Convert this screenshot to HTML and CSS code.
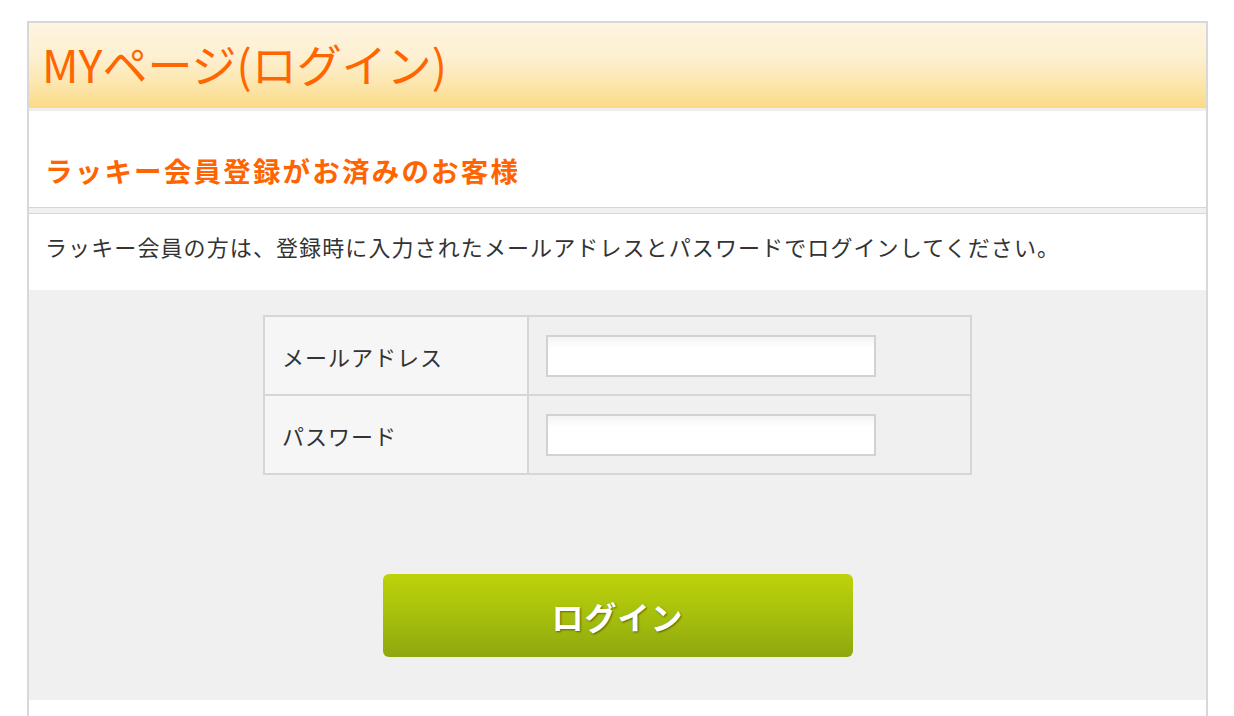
FILE: index.html
```html
<!DOCTYPE html>
<html>
<head>
    <meta charset="utf-8">
    <title>MYページ(ログイン)</title>
    <link rel="stylesheet" href="styles.css">
</head>
<body>
<div id="mypage">
    <h1 class="page-title">MYページ(ログイン)</h1>

    <div class="login-box">
        <h2 class="login-heading">ラッキー会員登録がお済みのお客様</h2>
        <p class="login-lead">ラッキー会員の方は、登録時に入力されたメールアドレスとパスワードでログインしてください。</p>

        <form class="login-form" onsubmit="return false;">
            <table class="login-table">
                <tr>
                    <th>メールアドレス</th>
                    <td><input type="text" name="email"></td>
                </tr>
                <tr>
                    <th>パスワード</th>
                    <td><input type="password" name="password"></td>
                </tr>
            </table>
            <div class="login-submit">
                <button type="submit">ログイン</button>
            </div>
        </form>
    </div>
    <div class="page-foot"></div>
</div>
</body>
</html>
```

FILE: styles.css
```css
html, body, h1, h2, p {
    margin: 0;
    padding: 0;
}
body {
    background: #fff;
    font-family: "Noto Sans CJK JP", "Noto Sans", sans-serif;
    color: #333;
}

#mypage {
    width: 1177px;
    margin: 21px 0 0 27px;
    border: 2px solid #d8d8d8;
    border-bottom: none;
}
.page-title {
    height: 84px;
    padding-left: 13px;
    line-height: 82px;
    font-size: 45px;
    font-weight: normal;
    letter-spacing: 0;
    color: #ff6600;
    background: linear-gradient(#fef5e0 0%, #fdf0d2 40%, #fce7b0 70%, #fbdb88 100%);
    border-bottom: 1px solid #d9d9d9;
    box-shadow: 0 3px 0 #efefef;
    margin-bottom: 3px;
}

.login-box {
    background: #f0f0f0;
}
.login-heading {
    padding: 39px 16px 17px;
    line-height: 40px;
    font-size: 27.5px;
    letter-spacing: 2.2px;
    color: #ff6400;
    background: #fff;
    border-bottom: 1px solid #d6d6d6;
}
.login-lead {
    margin-top: 5px;
    padding: 17px 16px 29px;
    line-height: 30px;
    font-size: 22px;
    letter-spacing: 1.1px;
    background: #fff;
    border-top: 1px solid #d6d6d6;
}

.login-form {
    padding: 25px 0 43px;
}
.login-table {
    width: 709px;
    margin: 0 auto;
    border-collapse: collapse;
}
.login-table th,
.login-table td {
    height: 75px;
    border: 2px solid #d6d6d6;
}
.login-table th {
    width: 244px;
    padding-left: 17px;
    text-align: left;
    font-size: 22px;
    font-weight: normal;
    letter-spacing: 1px;
    background: #f6f6f6;
}
.login-table td {
    padding-left: 17px;
    background: #f0f0f0;
}
.login-table input {
    display: block;
    width: 330px;
    height: 42px;
    box-sizing: border-box;
    border: 2px solid #d2d2d2;
    background: linear-gradient(#f4f4f4, #fff 30%);
    font-size: 18px;
}

.login-submit {
    margin-top: 99px;
    text-align: center;
}
.login-submit button {
    width: 470px;
    height: 83px;
    border: none;
    border-radius: 6px;
    background: linear-gradient(#bdd30a, #a6bf0c 50%, #8fa70f);
    color: #fff;
    font-family: "Noto Sans CJK JP", sans-serif;
    font-size: 32px;
    font-weight: bold;
    letter-spacing: 1px;
    text-shadow: 1px 1px 2px rgba(0, 0, 0, 0.45);
    cursor: pointer;
}

.page-foot {
    height: 40px;
    background: #fff;
}
```
